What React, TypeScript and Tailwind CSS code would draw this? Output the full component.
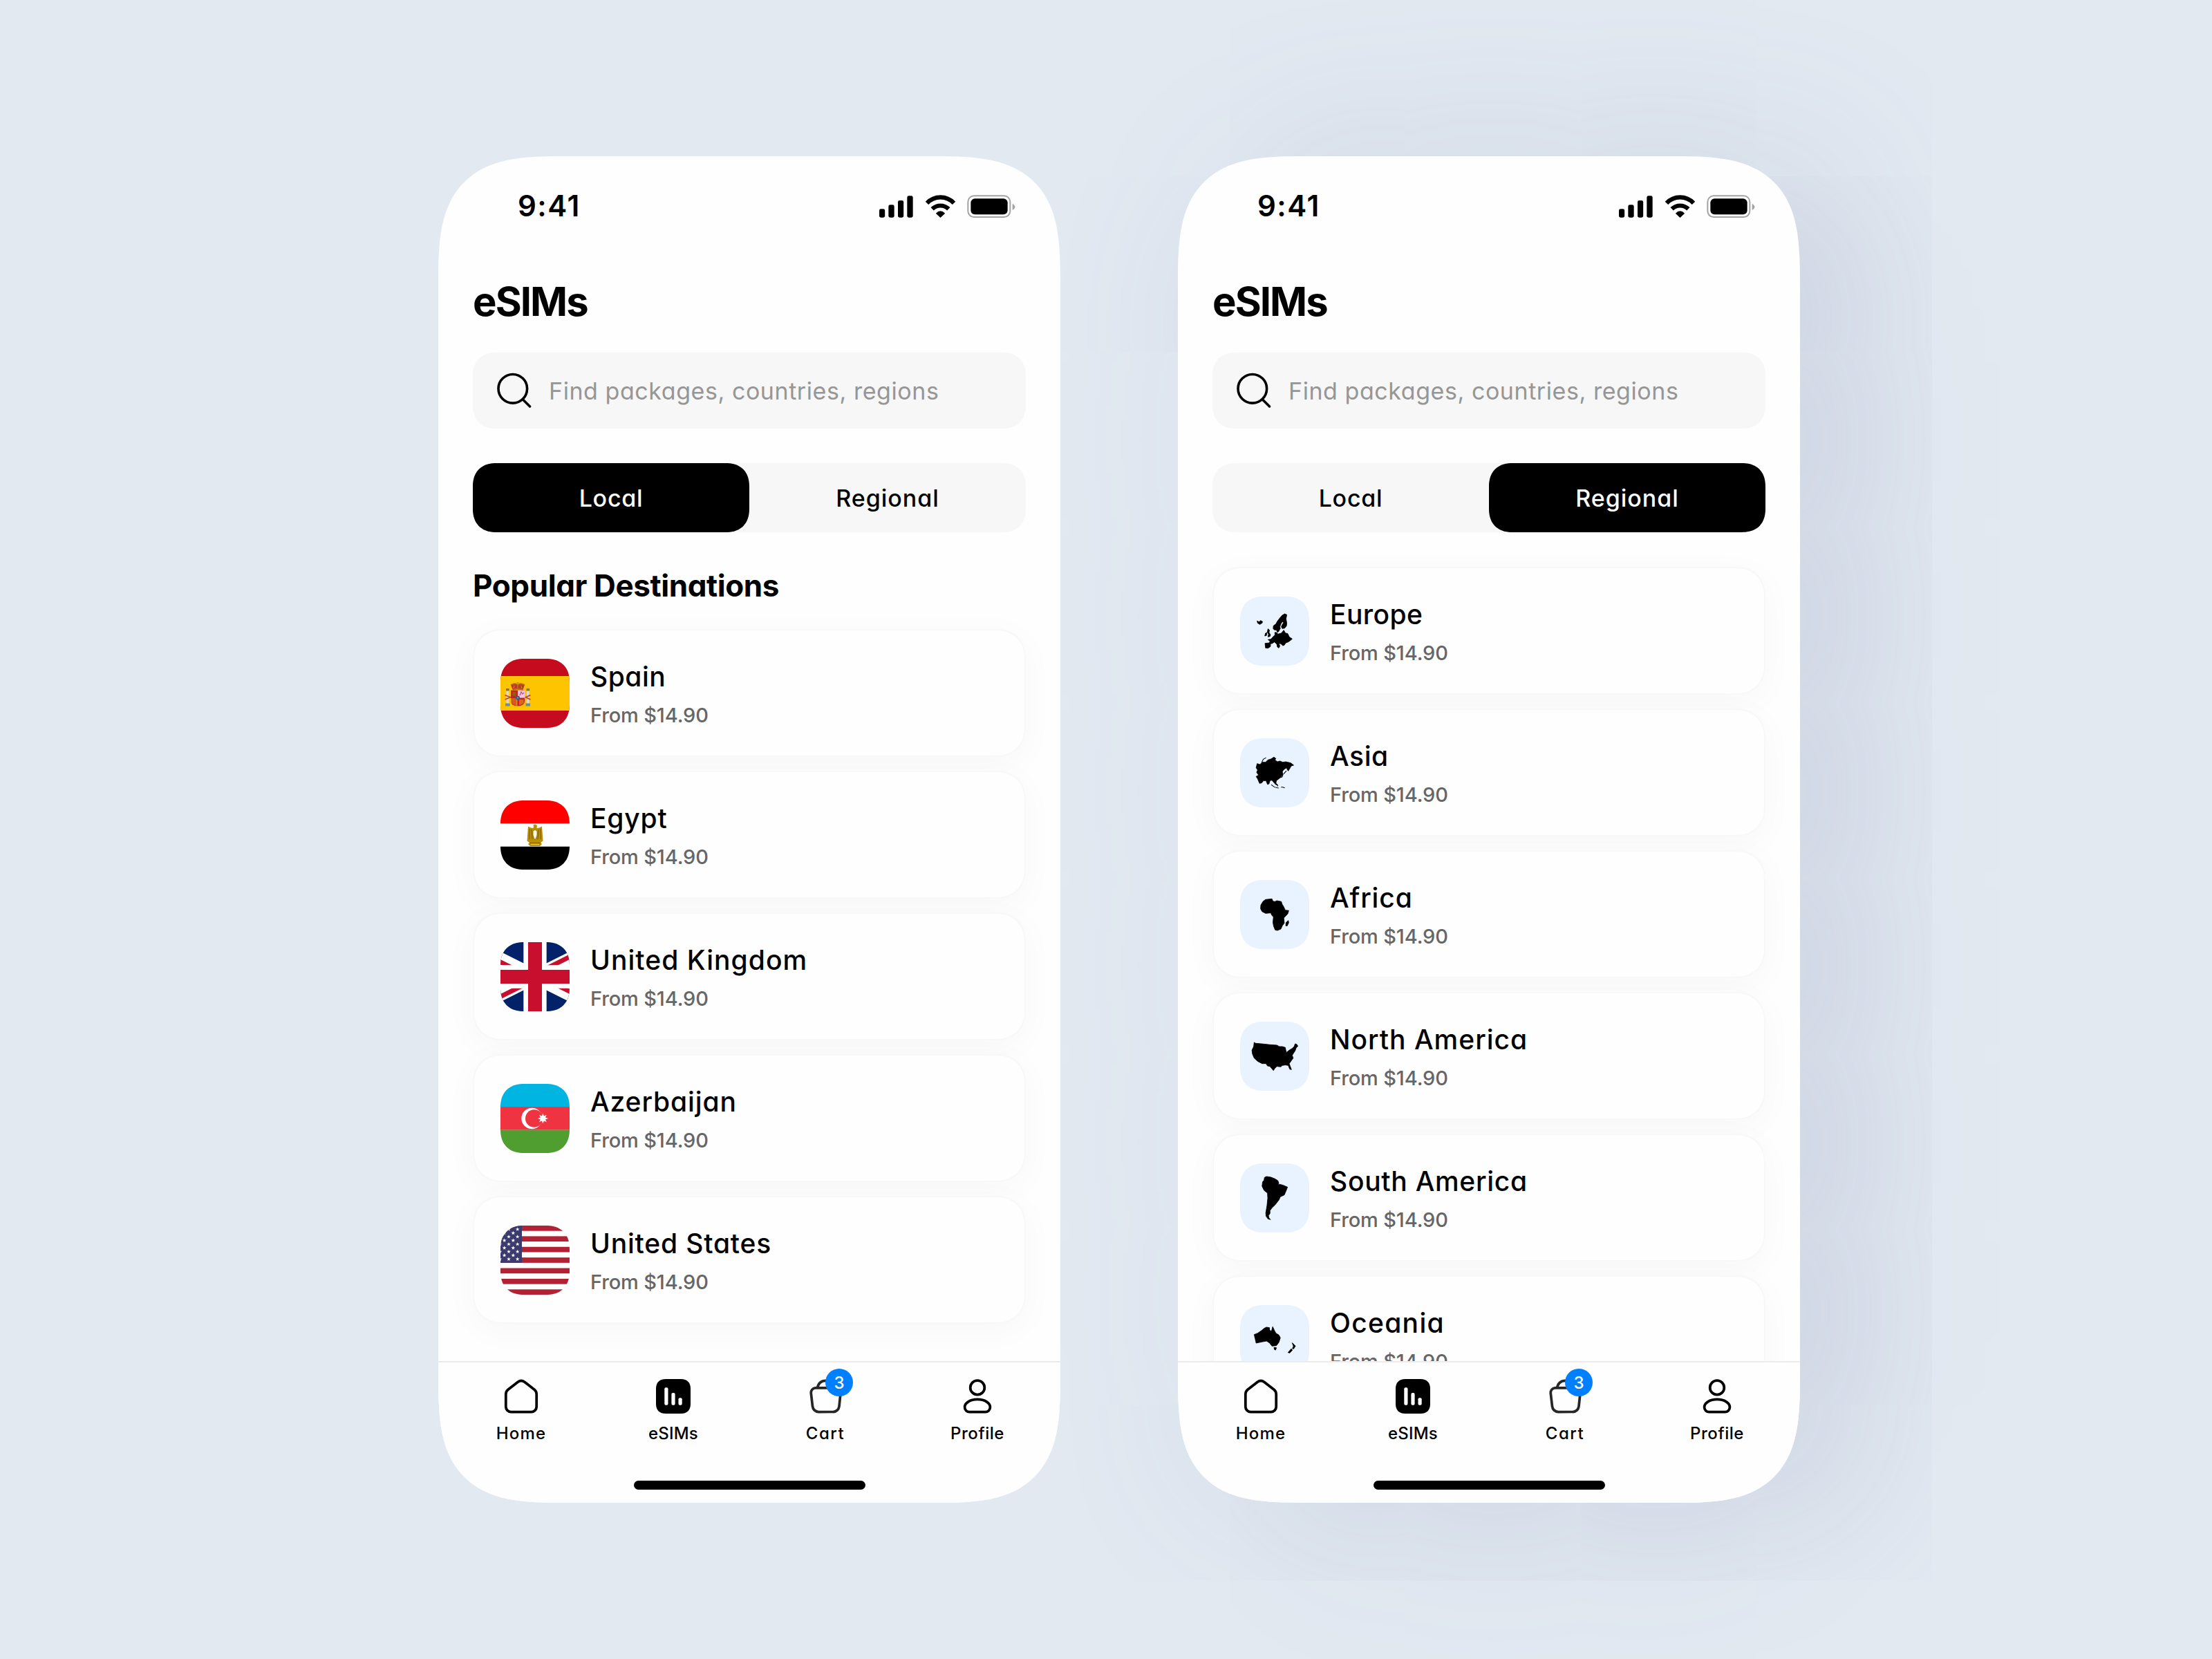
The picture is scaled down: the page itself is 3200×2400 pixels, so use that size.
import type { ReactNode } from "react";

const INTER = "font-['Inter',sans-serif] [font-feature-settings:'cv11']";

function StatusIcons() {
  return (
    <svg width="197" height="33" viewBox="66 96 591 99" fill="black">
      <rect x="66" y="157" width="24.5" height="37" rx="7" />
      <rect x="106" y="139" width="25" height="55" rx="7" />
      <rect x="147" y="120" width="24.5" height="74" rx="7" />
      <rect x="187" y="100" width="25" height="94" rx="7" />
      <path d="M273 131.500A79.700 79.700 0 0 1 390 131.500" fill="none" stroke="black" strokeWidth="18.500" />
      <path d="M296 157A51 51 0 0 1 367 157" fill="none" stroke="black" strokeWidth="18.500" />
      <path d="M331.500 195L311.500 176Q331.500 156 351.500 176Z" />
      <rect x="451" y="100" width="183" height="92" rx="26" fill="none" stroke="#a3a3a3" strokeWidth="6" />
      <rect x="463" y="112" width="160" height="69" rx="18" />
      <path d="M644 134Q655 140 655 148T644 162Z" fill="#a3a3a3" />
    </svg>
  );
}

function SearchIcon() {
  return (
    <svg className="size-[60px]" viewBox="0 0 60 60" fill="none" stroke="black" strokeWidth="3.600" strokeLinecap="round">
      <circle cx="27.800" cy="27.300" r="20.800" />
      <path d="M43.500 44L52.500 53" />
    </svg>
  );
}

function HomeIcon() {
  return (
    <svg className="size-[50px]" viewBox="0 0 50 50" fill="none" stroke="black" strokeWidth="3.750">
      <path d="M20.200 4.200a8.200 8.200 0 0 1 9.600 0L44 15.200a8.500 8.500 0 0 1 3.200 6.600V40a7.500 7.500 0 0 1-7.500 7.500H10.300A7.500 7.500 0 0 1 2.800 40V21.800A8.500 8.500 0 0 1 6 15.200Z" />
    </svg>
  );
}

function EsimIcon() {
  return (
    <svg className="size-[50px]" viewBox="0 0 50 50">
      <path d="M14 0H36C45 0 50 5 50 14V36C50 45 45 50 36 50H14C5 50 0 45 0 36V14C0 5 5 0 14 0Z" fill="black" />
      <g fill="white">
        <rect x="12.300" y="12.300" width="5.200" height="25.400" rx="2" />
        <rect x="22.400" y="20" width="5.200" height="17.700" rx="2" />
        <rect x="32.500" y="27.300" width="5.200" height="10.400" rx="2" />
      </g>
    </svg>
  );
}

function CartIcon() {
  return (
    <div className="relative size-[50px]">
      <svg className="size-[50px]" viewBox="0 0 50 50" fill="none" stroke="#262626" strokeWidth="3.750">
        <path d="M10.500 12.800H40a7 7 0 0 1 7 7.800L45 39.500a9 9 0 0 1-9 8H15.500a9 9 0 0 1-9-8L4.300 20.600a7 7 0 0 1 6.200-7.800Z" />
        <path d="M13.500 12.500C15 6 19.500 2.300 25.500 2.300S36 6 37.500 12.500" />
      </svg>
      <span className="absolute left-[25px] -top-[15px] flex size-[40px] items-center justify-center rounded-full bg-[#0080ff] pt-[2px] text-[24px] font-medium leading-[40px] text-white">
        3
      </span>
    </div>
  );
}

function ProfileIcon() {
  return (
    <svg className="size-[50px]" viewBox="0 0 50 50" fill="none" stroke="black" strokeWidth="3.750">
      <circle cx="25" cy="12.400" r="10.300" />
      <path d="M25 29.400C36 29.400 43.400 34.800 43.400 40.800C43.400 45 40 47.600 36.500 47.600H13.500C10 47.600 6.600 45 6.600 40.800C6.600 34.800 14 29.400 25 29.400Z" />
    </svg>
  );
}

function FlagSpain() {
  return (
    <svg viewBox="0 0 100 100">
      <rect width="100" height="100" fill="#c60b1e" />
      <rect y="25" width="100" height="50" fill="#ffc400" />
      <g>
        <rect x="8.500" y="46" width="3.600" height="19" fill="#d9d9d9" />
        <rect x="38" y="46" width="3.600" height="19" fill="#d9d9d9" />
        <rect x="8" y="43" width="4.600" height="3.400" fill="#8a7a12" />
        <rect x="37.500" y="43" width="4.600" height="3.400" fill="#8a7a12" />
        <rect x="7" y="64.500" width="6.600" height="4" fill="#6f8f86" />
        <rect x="36.500" y="64.500" width="6.600" height="4" fill="#6f8f86" />
        <path d="M6.500 52.500L15 56M6.500 59L14.500 55.500M43.500 52.500L35.500 56M43.500 59L36 55.500" stroke="#c8402a" strokeWidth="1.800" />
        <path d="M15 45.500H35V61Q35 68 25 68.500Q15 68 15 61Z" fill="#c8202a" />
        <rect x="25" y="45.500" width="10" height="11" fill="#f0c8d8" />
        <path d="M28 53l2-5 2 3 2-2" stroke="#d8489a" strokeWidth="1.300" fill="none" />
        <path d="M15.500 57H24.500V68Q16 67 15.500 61Z" fill="#d98014" />
        <path d="M18 57V67M21 57V68" stroke="#c8202a" strokeWidth="1.100" />
        <rect x="17.500" y="48" width="5" height="5.500" fill="#8a6212" />
        <path d="M27 59H33.500V64L30 66.500H27Z" fill="#d96a14" />
        <circle cx="25" cy="56.600" r="3" fill="#2d5e94" />
        <circle cx="25" cy="56.600" r="1" fill="#c9a24a" />
        <path d="M17.500 44.500L14.800 37.500Q20 34 25 37Q30 34 35.200 37.500L32.500 44.500Q25 42.500 17.500 44.500Z" fill="#c8352a" />
        <path d="M17.500 45Q25 43 32.500 45M15 38Q20 35 25 37.500Q30 35 35 38" stroke="#9b7a14" strokeWidth="1.500" fill="none" />
        <path d="M19 43l1-4M25 42.500V35M31 43l-1-4M23.500 34.500h3" stroke="#b98c16" strokeWidth="1.200" />
      </g>
    </svg>
  );
}

function FlagEgypt() {
  return (
    <svg viewBox="0 0 100 100">
      <rect width="100" height="100" fill="white" />
      <rect width="100" height="33.300" fill="#ff0000" />
      <rect y="66.700" width="100" height="33.300" fill="black" />
      <path
        d="M47.500 35.500L50 34.500L53 36L52.500 40L56 39.500L60 37.500L61.500 58.500L58 61L60 63L57 66H43L40 63L42 61L38.500 58.500L40 37.500L44 39.500L47.500 40L48 37.500Z"
        fill="#b98f0a"
      />
      <path d="M42 41v15M58 41v15M44.800 42l1.200 14M55.200 42l-1.200 14M42 61.500h16" stroke="#6e5200" strokeWidth="0.900" />
      <path d="M47 44Q50 41 53 44V50L51 56H49L47 50Z" fill="#fffbe8" stroke="#8a6a00" strokeWidth="0.800" />
      <path d="M44 63.500h12" stroke="#e8c040" strokeWidth="1.500" />
    </svg>
  );
}

function FlagUK() {
  return (
    <svg viewBox="15 0 30 30">
      <clipPath id="uk-quarters">
        <path d="M30 15h30v15zv15H0zH0V0zV0h30z" />
      </clipPath>
      <rect width="60" height="30" fill="#012169" />
      <path d="M0 0L60 30M60 0L0 30" stroke="#fff" strokeWidth="6" />
      <path d="M0 0L60 30M60 0L0 30" stroke="#c8102e" strokeWidth="4" clipPath="url(#uk-quarters)" />
      <path d="M30 0V30M0 15H60" stroke="#fff" strokeWidth="10" />
      <path d="M30 0V30M0 15H60" stroke="#c8102e" strokeWidth="6" />
    </svg>
  );
}

function starPoints(cx: number, cy: number, outer: number, inner: number, tips: number) {
  return Array.from({ length: tips * 2 }, (_, i) => {
    const r = i % 2 ? inner : outer;
    const a = (Math.PI * i) / tips - Math.PI / 2;
    return `${(cx + r * Math.cos(a)).toFixed(2)},${(cy + r * Math.sin(a)).toFixed(2)}`;
  }).join(" ");
}

function FlagAzerbaijan() {
  return (
    <svg viewBox="0 0 100 100">
      <rect width="100" height="34" fill="#00b5e2" />
      <rect y="33.300" width="100" height="33.400" fill="#ef3340" />
      <rect y="66.600" width="100" height="33.400" fill="#509e2f" />
      <circle cx="45.500" cy="50" r="15.200" fill="white" />
      <circle cx="48.700" cy="50" r="12.700" fill="#ef3340" />
      <polygon points={starPoints(61.4, 50, 7.6, 3.9, 8)} fill="white" />
    </svg>
  );
}

function FlagUSA() {
  const stripe = 100 / 13;
  const stars: [number, number][] = [];
  for (let row = 1; row <= 9; row++) {
    for (let col = 7; col <= 11; col++) {
      if (row % 2 === col % 2) stars.push([col * 6.333 - 45, row * 5.385]);
    }
  }
  return (
    <svg viewBox="0 0 100 100">
      <rect width="100" height="100" fill="white" />
      {[0, 2, 4, 6, 8, 10, 12].map((n) => (
        <rect key={n} y={n * stripe} width="100" height={stripe} fill="#b22234" />
      ))}
      <rect width="31" height={stripe * 7} fill="#3c3b6e" />
      {stars.map(([x, y]) => (
        <polygon key={`${x}-${y}`} points={starPoints(x, y, 3, 1.2, 5)} fill="white" />
      ))}
    </svg>
  );
}

/* Silhouettes are traced on a 280x300 grid that covers the whole tile. */
function RegionMap({ top, d, islands }: { top: number; d: string; islands?: string }) {
  return (
    <svg viewBox={`263 ${top} 280 300`} preserveAspectRatio="none" className="size-[100px]">
      <path d={d} fill="black" stroke="black" strokeWidth="2.500" strokeLinejoin="round" />
      {islands && <path d={islands} fill="none" stroke="black" strokeWidth="3" strokeLinecap="round" />}
    </svg>
  );
}

const EUROPE =
  "M332 293L340 297L346 291L354 296L352 302L343 308L334 302ZM444 262L452 266L449 284L452 302L451 314L444 324L434 326L430 318L435 306L440 300L434 296L428 306L424 318L426 326L422 332L420 338L414 342L410 332L402 332L397 326L398 314L408 306L414 294L424 280L434 268ZM376 327L382 333L380 342L386 354L384 360L376 362L378 350L373 342ZM366 346L371 344L370 356L363 358ZM440 333L446 345L456 348L462 362L474 371L466 378L458 384L448 388L442 398L436 400L428 392L420 390L424 402L420 410L414 406L412 394L402 384L394 390L386 392L386 404L376 411L366 410L364 390L382 388L384 380L376 374L388 372L396 362L404 354L404 342L412 344L416 350L430 346Z";
const ASIA =
  "M400 884L408 890L404 896L414 904L424 901L436 906L448 904L468 909L480 919L470 922L466 930L458 944L454 938L452 930L442 936L434 946L436 958L430 968L420 978L410 986L408 998L414 1004L408 1004L400 994L392 984L384 986L380 1000L374 1002L368 986L358 986L350 996L342 998L334 978L328 968L338 962L330 950L334 940L328 930L332 912L344 916L352 906L366 906L376 896L388 892Z";
const AFRICA =
  "M366 302L392 299L396 309L404 311L412 307L430 311L433 322L438 330L446 348L460 350L456 364L440 382L442 404L434 416L428 430L414 436L405 434L399 418L396 402L398 378L390 368L388 360L366 362L352 354L346 342L347 326L356 310ZM458 393L460 402L454 416L448 416L449 402Z";
const NORTH_AMERICA =
  "M320 922L326 926L350 928L384 932L412 934L422 940L434 940L446 944L450 966L462 956L474 948L482 940L486 928L492 930L497 938L490 946L486 958L480 968L474 978L478 990L470 1002L462 1014L466 1026L471 1040L464 1038L458 1022L446 1020L434 1022L428 1028L412 1026L404 1034L398 1044L390 1034L384 1026L374 1024L368 1014L352 1014L334 1004L320 990L313 972L311 956L318 940Z";
const SOUTH_AMERICA =
  "M370 304L388 307L404 314L416 322L420 334L414 340L424 338L438 342L455 350L450 364L442 384L426 392L420 406L404 428L392 440L384 452L384 464L378 474L380 484L386 491L376 488L368 476L367 462L372 430L375 398L374 376L360 364L352 346L354 328L360 320L362 308Z";
const OCEANIA =
  "M320 990L334 984L348 974L362 962L370 958L382 960L382 970L390 976L395 956L402 972L408 984L420 992L426 1004L420 1024L410 1038L392 1040L382 1026L370 1018L350 1022L328 1027L324 1008ZM400 1046L410 1047L407 1057L402 1055ZM474 1026L482 1034L487 1040L480 1052L475 1051L479 1040ZM470 1052L475 1057L464 1070L457 1068Z";

type Item = { name: string; spacing: string; tile: ReactNode };

const destinations: Item[] = [
  { name: "Spain", spacing: "tracking-[0.5px]", tile: <FlagSpain /> },
  { name: "Egypt", spacing: "tracking-[0.82px]", tile: <FlagEgypt /> },
  { name: "United Kingdom", spacing: "tracking-[1.05px]", tile: <FlagUK /> },
  { name: "Azerbaijan", spacing: "tracking-[0.89px]", tile: <FlagAzerbaijan /> },
  { name: "United States", spacing: "tracking-[0.82px]", tile: <FlagUSA /> },
];

const regions: Item[] = [
  { name: "Europe", spacing: "tracking-[0.4px]", tile: <RegionMap top={187} d={EUROPE} /> },
  {
    name: "Asia",
    spacing: "tracking-[0.57px]",
    tile: (
      <RegionMap
        top={802}
        d={ASIA}
        islands="M351 906L357 893L367 887M424 973L433 970L437 958M450 944L440 956M390 1004L402 1014L418 1018M410 1000L416 1006L414 1010M430 1014L436 1014L443 1017"
      />
    ),
  },
  { name: "Africa", spacing: "tracking-[0.9px]", tile: <RegionMap top={217} d={AFRICA} /> },
  { name: "North America", spacing: "tracking-[1px]", tile: <RegionMap top={832} d={NORTH_AMERICA} /> },
  { name: "South America", spacing: "tracking-[0.71px]", tile: <RegionMap top={247} d={SOUTH_AMERICA} /> },
  { name: "Oceania", spacing: "tracking-[1.3px]", tile: <RegionMap top={862} d={OCEANIA} /> },
];

const tabs = [
  { label: "Home", spacing: "tracking-[1.2px]", icon: <HomeIcon /> },
  { label: "eSIMs", spacing: "tracking-[0.16px]", icon: <EsimIcon /> },
  { label: "Cart", spacing: "tracking-[1.5px]", icon: <CartIcon /> },
  { label: "Profile", spacing: "tracking-[0.55px]", icon: <ProfileIcon /> },
];

function Card({ item, tint }: { item: Item; tint: boolean }) {
  return (
    <div className="flex h-[185px] shrink-0 items-center gap-[30px] rounded-[44px] border-2 border-[#f8f8f8] bg-[#fefefe] px-[38px] shadow-[0_10px_50px_rgba(0,0,0,0.03)] [corner-shape:superellipse(1.2)]">
      <div
        className={`size-[100px] shrink-0 overflow-hidden rounded-[34px] [corner-shape:superellipse(1.2)] ${tint ? "bg-[#e8f3ff]" : ""}`}
      >
        {item.tile}
      </div>
      <div className="flex flex-col">
        <span className={`text-[39px] font-medium leading-[64px] text-black ${item.spacing}`}>{item.name}</span>
        <span className="text-[29px] font-medium leading-[48px] tracking-[-0.15px] text-[#666]">From $14.90</span>
      </div>
    </div>
  );
}

function Segment({ label, active, spacing }: { label: string; active: boolean; spacing: string }) {
  return (
    <div
      className={`flex w-[400px] items-center justify-center rounded-[34px] text-[34px] font-medium [corner-shape:superellipse(1.2)] ${spacing} ${
        active ? "bg-black text-white" : "text-black"
      }`}
    >
      {label}
    </div>
  );
}

function Phone({ active, children }: { active: "Local" | "Regional"; children: ReactNode }) {
  return (
    <div className="flex h-[1948px] w-[900px] shrink-0 flex-col overflow-hidden rounded-[184px] bg-[#fefefe] [corner-shape:superellipse(1.6)]">
      <div className="flex h-[1743px] flex-col overflow-hidden px-[50px]">
        <div className="flex h-[144px] shrink-0 items-center justify-between pl-[65px] pr-[15px]">
          <span className="text-[42px] font-semibold leading-none tracking-[1.5px]">9:41</span>
          <div className="pt-[1px]">
            <StatusIcons />
          </div>
        </div>
        <h1 className="mt-[26px] text-[58px] font-bold leading-[80px] tracking-[-1.9px]">eSIMs</h1>
        <div className="mt-[34px] flex h-[110px] shrink-0 items-center gap-[20px] rounded-[34px] bg-[#f7f7f7] px-[30px] [corner-shape:superellipse(1.2)]">
          <SearchIcon />
          <span className="text-[34px] tracking-[0.56px] text-[#969696]">Find packages, countries, regions</span>
        </div>
        <div className="mt-[50px] flex h-[100px] shrink-0 rounded-[34px] bg-[#f7f7f7] [corner-shape:superellipse(1.2)]">
          <Segment label="Local" active={active === "Local"} spacing="tracking-[0.75px]" />
          <Segment label="Regional" active={active === "Regional"} spacing="tracking-[0.97px]" />
        </div>
        {children}
      </div>
      <div className="flex h-[205px] flex-col items-center border-t-2 border-[#ececec] bg-[#fefefe] pt-[24px]">
        <div className="flex w-[880px]">
          {tabs.map((tab) => (
            <div key={tab.label} className="flex flex-1 flex-col items-center gap-[13px]">
              {tab.icon}
              <span className={`text-[24px] font-medium leading-[32px] ${tab.spacing}`}>{tab.label}</span>
            </div>
          ))}
        </div>
        <div className="mt-[52px] h-[13px] w-[335px] rounded-full bg-black" />
      </div>
    </div>
  );
}

export default function App() {
  return (
    <div className={`flex h-[2400px] w-[3200px] gap-[170px] overflow-hidden bg-[#e2e9f1] pl-[634px] pt-[226px] text-black ${INTER}`}>
      <div className="relative z-10">
        <Phone active="Local">
          <h2 className="mt-[47px] text-[44px] font-bold leading-[60px] tracking-[-0.4px]">Popular Destinations</h2>
          <div className="mt-[33px] flex flex-col gap-[20px]">
            {destinations.map((item) => (
              <Card key={item.name} item={item} tint={false} />
            ))}
          </div>
        </Phone>
      </div>
      <div className="h-[1948px] rounded-[160px] shadow-[80px_20px_500px_rgba(100,110,155,0.21)]">
        <Phone active="Regional">
          <div className="mt-[50px] flex flex-col gap-[20px]">
            {regions.map((item) => (
              <Card key={item.name} item={item} tint />
            ))}
          </div>
        </Phone>
      </div>
    </div>
  );
}
